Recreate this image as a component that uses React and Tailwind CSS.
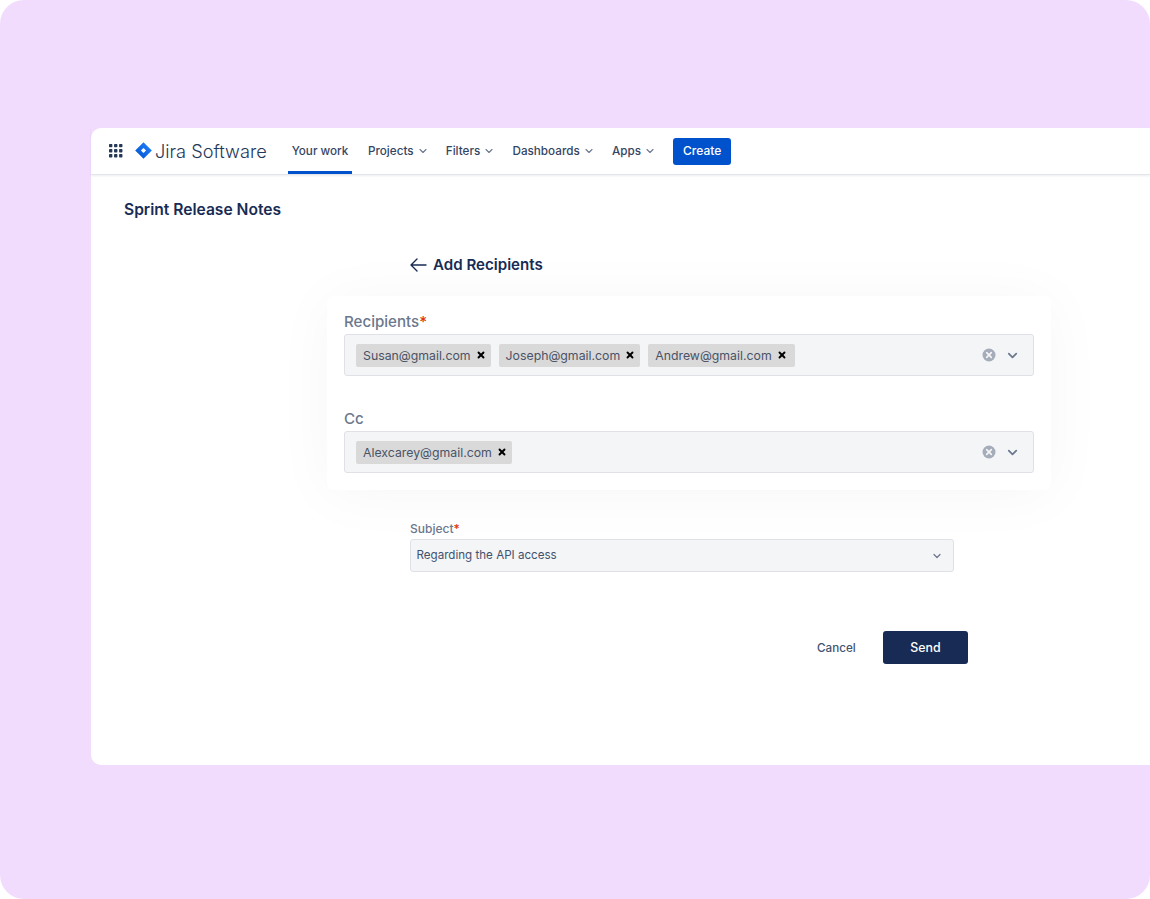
import React from "react";
import { ChevronDown, X } from "lucide-react";

const font = "font-['Inter',sans-serif]";

function NavItem({ label }) {
  return (
    <div className="flex items-center gap-[3px] pt-px text-[11.7px] font-medium text-[#344563]">
      <span>{label}</span>
      <ChevronDown size={12} strokeWidth={2.2} className="text-[#6b778c]" />
    </div>
  );
}

function AppsGrid() {
  return (
    <svg width="14" height="14" viewBox="0 0 15 15" fill="#253858">
      {[0, 5.4, 10.8].map((y) =>
        [0, 5.4, 10.8].map((x) => <rect key={`${x}-${y}`} x={x} y={y} width="3.6" height="3.6" rx="0.8" />)
      )}
    </svg>
  );
}

function JiraMark() {
  return (
    <svg width="17" height="17" viewBox="0 0 17 17">
      <defs>
        <linearGradient id="jira" x1="1" y1="0" x2="0" y2="1">
          <stop offset="0" stopColor="#2684ff" />
          <stop offset="1" stopColor="#0052cc" />
        </linearGradient>
      </defs>
      <path d="M8.5 0.2 16.8 8.5 8.5 16.8 0.2 8.5Z" fill="url(#jira)" />
      <path d="M8.5 5.9 11.1 8.5 8.5 11.1 5.9 8.5Z" fill="#fff" />
    </svg>
  );
}

function Tag({ label, wide }) {
  return (
    <div className={`flex h-[23px] items-center gap-[5px] rounded-[2px] bg-[#d9d9d9] pl-[7px] text-[12.3px] text-[#4a5366] ${wide ? "pr-[8px]" : "pr-[5px]"}`}>
      <span className="pt-[2px]">{label}</span>
      <X size={10} strokeWidth={4.5} className="text-black" />
    </div>
  );
}

function ClearIcon() {
  return (
    <svg width="14" height="14" viewBox="0 0 14 14">
      <circle cx="7" cy="7" r="6.5" fill="#a5adba" />
      <path d="M4.7 4.7 9.3 9.3M9.3 4.7 4.7 9.3" stroke="#f4f5f7" strokeWidth="1.7" strokeLinecap="round" />
    </svg>
  );
}

function MultiSelect({ tags }) {
  return (
    <div className="flex h-[42px] items-center rounded-[3px] border border-[#dfe1e6] bg-[#f4f5f7] pl-[11px] pr-[13.5px]">
      <div className="flex flex-1 items-center gap-[8px]">
        {tags.map((t) => (
          <Tag key={t} label={t} wide={t === "Andrew@gmail.com"} />
        ))}
      </div>
      <ClearIcon />
      <ChevronDown size={15} strokeWidth={2.8} className="ml-[8.5px] text-[#6b778c]" />
    </div>
  );
}

export default function App() {
  return (
    <div className={`min-h-[899px] bg-white ${font}`}>
      <div className="h-[899px] overflow-hidden rounded-[24px] bg-[#f1dcfe] pl-[91px] pt-[128px]">
        <div className="h-[637px] rounded-l-[10px] bg-white">
          <header className="flex h-[47px] items-center border-b border-[#e4e5ea] pl-[18px] shadow-[0_1px_2px_rgba(9,30,66,0.08)]">
            <AppsGrid />
            <div className="ml-[12px] flex items-center gap-[3px]">
              <JiraMark />
              <span className="w-[111px] whitespace-nowrap text-[18.2px] font-light leading-none text-[#253858]">Jira Software</span>
            </div>
            <div className="ml-[22px] flex h-full items-center gap-[17.2px]">
              <div className="-mr-[1.2px] flex h-full w-[64px] items-center justify-center border-b-[3px] border-[#0052cc] pt-[4px] text-[11.7px] font-medium text-[#344563]">
                Your work
              </div>
              <NavItem label="Projects" />
              <NavItem label="Filters" />
              <NavItem label="Dashboards" />
              <NavItem label="Apps" />
              <button className="flex h-[27px] w-[58px] items-center justify-center rounded-[3px] bg-[#0052cc] text-[12px] font-medium text-white">
                Create
              </button>
            </div>
          </header>

          <h1 className="ml-[33px] mt-[25px] text-[15.6px] font-semibold leading-[20px] text-[#172b54]">Sprint Release Notes</h1>

          <div className="ml-[319px] mt-[35px] flex items-center gap-[6px]">
            <svg width="17" height="14" viewBox="0 0 17 14" fill="none" stroke="#172b54" strokeWidth="1.4" strokeLinecap="round" strokeLinejoin="round">
              <path d="M16 7H1M7 1 1 7l6 6" />
            </svg>
            <span className="text-[15.1px] font-semibold leading-[20px] text-[#172b54]">Add Recipients</span>
          </div>

          <div className="ml-[236px] mt-[21px] w-[724px] rounded-[6px] bg-white px-[17px] pb-[17px] pt-[15px] shadow-[0_4px_60px_rgba(0,0,0,0.04)]">
            <div className="h-[20px] pt-px text-[15.1px] font-medium leading-[20px] text-[#6b778c]">
              Recipients<span className="text-[#de350b]">*</span>
            </div>
            <div className="mt-[3px]">
              <MultiSelect tags={["Susan@gmail.com", "Joseph@gmail.com", "Andrew@gmail.com"]} />
            </div>
            <div className="mt-[33px] h-[20px] text-[15.1px] font-medium leading-[20px] text-[#6b778c]">Cc</div>
            <div className="mt-[2px]">
              <MultiSelect tags={["Alexcarey@gmail.com"]} />
            </div>
          </div>

          <div className="ml-[319px] mt-[31px] w-[544px]">
            <div className="text-[12px] font-medium leading-[16px] text-[#6b778c]">
              Subject<span className="text-[#de350b]">*</span>
            </div>
            <div className="mt-[2px] flex h-[33px] items-center justify-between rounded-[3px] border border-[#dfe1e6] bg-[#f4f5f7] pl-[5.5px] pr-[10px] text-[11.6px] text-[#42526e]">
              <span>Regarding the API access</span>
              <ChevronDown size={12} strokeWidth={2.4} className="text-[#6b778c]" />
            </div>
          </div>

          <div className="ml-[726px] mt-[59px] flex w-[151px] items-center justify-between">
            <span className="pt-[2px] text-[11.7px] font-medium text-[#42526e]">Cancel</span>
            <button className="flex h-[33px] w-[85px] items-center justify-center rounded-[3px] bg-[#172b54] pt-[2px] text-[12.4px] font-medium text-white">
              Send
            </button>
          </div>
        </div>
      </div>
    </div>
  );
}
